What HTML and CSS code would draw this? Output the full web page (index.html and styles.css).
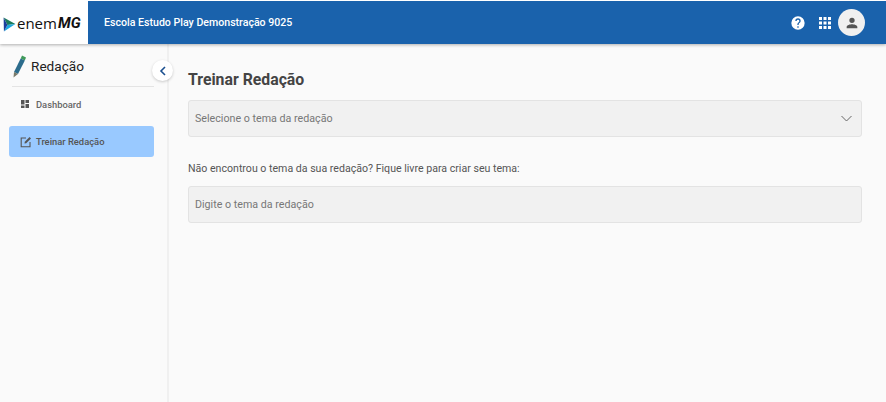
FILE: index.html
```html
<!DOCTYPE html>
<html lang="pt-BR">
  <head>
    <meta charset="UTF-8" />
    <title>Treinar Redação</title>
    <link rel="stylesheet" href="styles.css">
  </head>
  <body>
    <header class="topbar">
      <div class="logo">
        <svg class="logo-mark" width="13" height="15" viewBox="0 0 12 14">
          <path d="M0.5 0.5 L11.5 6.5 L4 7.5 Z" fill="#1c7a5a" />
          <path d="M4 7.5 L11.5 6.5 L0.8 13.5 Z" fill="#1fa8e0" />
          <path d="M0.5 0.5 L4 7.5 L0.8 13.5 Z" fill="#1b3f9c" />
        </svg>
        <span class="logo-enem">enem</span><span class="logo-mg">MG</span>
      </div>
      <div class="school">Escola Estudo Play Demonstração 9025</div>
      <div class="top-icons">
        <svg width="16" height="16" viewBox="0 0 24 24"><path fill="#fff" d="M12 2a10 10 0 1 0 0 20 10 10 0 0 0 0-20zm1 17h-2v-2h2v2zm2.07-7.75-.9.92C13.45 12.9 13 13.5 13 15h-2v-.5c0-1.1.45-2.1 1.17-2.83l1.24-1.26c.37-.36.59-.86.59-1.41a2 2 0 0 0-4 0H8a4 4 0 0 1 8 0c0 .88-.36 1.68-.93 2.25z"/></svg>
        <svg class="apps" width="12" height="12" viewBox="0 0 12 12">
          <path fill="#fff" d="M0 0h3v3H0zM4.5 0h3v3h-3zM9 0h3v3H9zM0 4.5h3v3H0zM4.5 4.5h3v3h-3zM9 4.5h3v3H9zM0 9h3v3H0zM4.5 9h3v3h-3zM9 9h3v3H9z"/>
        </svg>
        <div class="avatar">
          <svg width="16" height="16" viewBox="0 0 24 24"><path fill="#555" d="M12 12a4 4 0 1 0 0-8 4 4 0 0 0 0 8zm0 2c-2.7 0-8 1.3-8 4v2h16v-2c0-2.7-5.3-4-8-4z"/></svg>
        </div>
      </div>
    </header>

    <div class="layout">
      <aside class="sidebar">
        <div class="side-title">
          <svg width="15" height="23" viewBox="0 0 14 23">
            <path d="M9.5 0.5 L13.5 2.5 L12.3 5.5 L8.2 3.5 Z" fill="#3f9a5a" />
            <path d="M8.2 3.5 L12.3 5.5 L5.5 19 L1.5 17 Z" fill="#2c6c8c" />
            <path d="M1.5 17 L5.5 19 L1 22.5 Z" fill="#7a7a6a" />
          </svg>
          <span>Redação</span>
        </div>
        <nav class="side-nav">
          <a class="nav-item">
            <svg width="8" height="8" viewBox="0 0 8 8"><path fill="#555" d="M0 0h3.5v4.5H0zM4.5 0H8v3H4.5zM4.5 4H8v4H4.5zM0 5.5h3.5V8H0z"/></svg>
            Dashboard
          </a>
          <a class="nav-item active">
            <svg width="12" height="12" viewBox="0 0 12 12" fill="none" stroke="#555" stroke-width="1.1"><path d="M6 2H1.2v8.8H10V6"/><path d="M4.5 7.5 L4.8 5.8 L9.6 1 L11 2.4 L6.2 7.2 Z" fill="#555" stroke="none"/></svg>
            Treinar Redação
          </a>
        </nav>
        <button class="collapse">
          <svg width="8" height="10" viewBox="0 0 8 10" fill="none" stroke="#1a4f8f" stroke-width="1.6"><path d="M6 1 L2 5 L6 9"/></svg>
        </button>
      </aside>

      <main class="content">
        <h1 class="page-title">Treinar Redação</h1>
        <div class="field select-field">
          <span>Selecione o tema da redação</span>
          <svg width="11" height="7" viewBox="0 0 11 7" fill="none" stroke="#666" stroke-width="1"><path d="M0.5 1 L5.5 6 L10.5 1"/></svg>
        </div>
        <p class="hint">Não encontrou o tema da sua redação? Fique livre para criar seu tema:</p>
        <div class="field">
          <span>Digite o tema da redação</span>
        </div>
      </main>
    </div>
  </body>
</html>
```

FILE: styles.css
```css
* {
  box-sizing: border-box;
}
html, body {
  height: 100%;
}
body {
  margin: 0;
  background-color: #fafafa;
  font-family: Roboto, "Liberation Sans", sans-serif;
  color: #444;
  overflow: hidden;
  display: flex;
  flex-direction: column;
}
.topbar {
  height: 44px;
  flex-shrink: 0;
  display: flex;
  align-items: center;
  background-color: #1a62ac;
  border-top: 1px solid #fff;
  box-shadow: 0 1px 3px rgba(0, 0, 0, 0.3);
  position: relative;
  z-index: 2;
}
.logo {
  width: 88px;
  height: 100%;
  background-color: #fff;
  display: flex;
  align-items: center;
  padding-left: 3px;
}
.logo-mark {
  margin-right: 1px;
  margin-top: 3px;
}
.logo-enem {
  font-size: 15px;
  color: #111;
  font-family: "Open Sans", sans-serif;
}
.logo-mg {
  font-size: 15px;
  font-weight: 700;
  font-style: italic;
  color: #111;
  margin-left: 1px;
}
.school {
  margin-left: 16px;
  color: #fff;
  font-size: 10.6px;
  font-weight: 500;
}
.top-icons {
  margin-left: auto;
  margin-right: 21px;
  display: flex;
  align-items: center;
}
.apps {
  margin-left: 13px;
}
.avatar {
  width: 27px;
  height: 27px;
  border-radius: 50%;
  background-color: #f0f0f0;
  margin-left: 7px;
  display: flex;
  align-items: center;
  justify-content: center;
}
.layout {
  flex: 1;
  display: flex;
}
.sidebar {
  width: 169px;
  flex-shrink: 0;
  border-right: 2px solid #f0f0f0;
  padding: 0 13px 0 9px;
  position: relative;
}
.side-title {
  height: 43px;
  margin: 0 0 0 3px;
  border-bottom: 1px solid #e4e4e4;
  display: flex;
  align-items: center;
  gap: 4px;
  font-size: 13.6px;
  color: #222;
  padding-top: 2px;
}
.side-nav {
  display: flex;
  flex-direction: column;
  gap: 6px;
  margin-top: 1px;
}
.nav-item {
  height: 32px;
  display: flex;
  align-items: center;
  font-size: 9.4px;
  font-weight: 500;
  color: #666;
  gap: 7px;
  padding-left: 12px;
  border-radius: 3px;
}
.nav-item.active {
  height: 31px;
  background-color: #99c9ff;
  padding-left: 11px;
  gap: 4px;
  color: #555;
}
.collapse {
  position: absolute;
  top: 16px;
  right: -6px;
  width: 21px;
  height: 21px;
  padding: 0;
  border: none;
  border-radius: 50%;
  background-color: #fff;
  box-shadow: 0 1px 3px rgba(0, 0, 0, 0.2);
  display: flex;
  align-items: center;
  justify-content: center;
}
.content {
  flex: 1;
  padding: 26px 24px 0 19px;
}
.page-title {
  margin: 0 0 10px;
  font-size: 15.8px;
  line-height: 20px;
  font-weight: 700;
  color: #444;
}
.field {
  height: 37px;
  display: flex;
  align-items: center;
  justify-content: space-between;
  padding: 0 9px 1px 6px;
  background-color: #f1f1f1;
  border: 1px solid #e3e3e3;
  border-radius: 3px;
  font-size: 10.7px;
  color: #777;
}
.hint {
  margin: 25px 0 10px;
  font-size: 10.6px;
  line-height: 14px;
  color: #555;
}
```
